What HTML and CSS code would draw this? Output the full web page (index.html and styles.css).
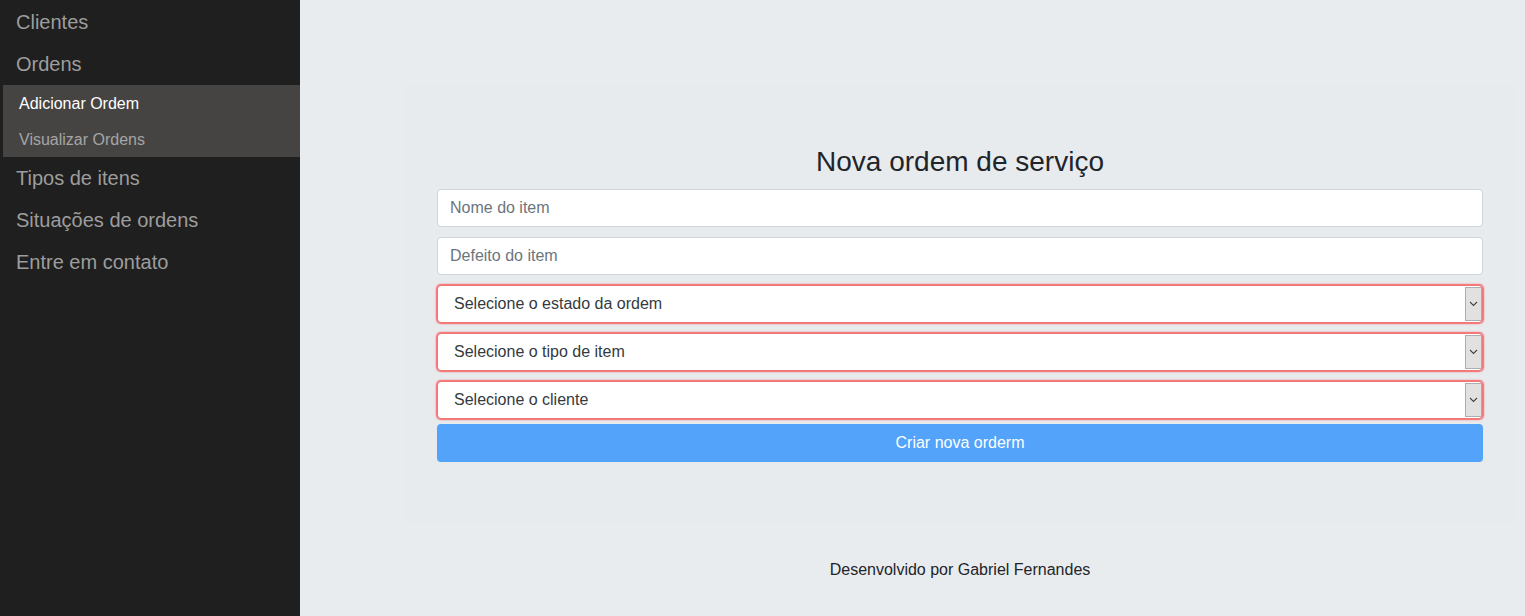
FILE: index.html
```html
<!DOCTYPE html>
<html lang="pt-BR">
<head>
<meta charset="utf-8">
<title>Nova ordem de serviço</title>
<link rel="stylesheet" href="styles.css">
</head>
<body>
<div class="app">
  <nav class="sidebar">
    <a class="nav-item top">Clientes</a>
    <a class="nav-item top">Ordens</a>
    <div class="submenu">
      <a class="sub-item active">Adicionar Ordem</a>
      <a class="sub-item">Visualizar Ordens</a>
    </div>
    <a class="nav-item">Tipos de itens</a>
    <a class="nav-item">Situações de ordens</a>
    <a class="nav-item">Entre em contato</a>
  </nav>
  <main class="main">
    <div class="wrap">
      <section class="panel">
        <h1 class="title">Nova ordem de serviço</h1>
        <form class="form">
          <input class="field" type="text" placeholder="Nome do item">
          <input class="field" type="text" placeholder="Defeito do item">
          <div class="select-wrap">
            <div class="select">Selecione o estado da ordem</div>
            <span class="arrow"><svg width="9" height="6" viewBox="0 0 9 6"><path d="M1 1l3.5 3.5L8 1" fill="none" stroke="#444" stroke-width="1.1"/></svg></span>
          </div>
          <div class="select-wrap">
            <div class="select">Selecione o tipo de item</div>
            <span class="arrow"><svg width="9" height="6" viewBox="0 0 9 6"><path d="M1 1l3.5 3.5L8 1" fill="none" stroke="#444" stroke-width="1.1"/></svg></span>
          </div>
          <div class="select-wrap">
            <div class="select">Selecione o cliente</div>
            <span class="arrow"><svg width="9" height="6" viewBox="0 0 9 6"><path d="M1 1l3.5 3.5L8 1" fill="none" stroke="#444" stroke-width="1.1"/></svg></span>
          </div>
          <button class="btn" type="button">Criar nova orderm</button>
        </form>
      </section>
      <footer class="footer">Desenvolvido por Gabriel Fernandes</footer>
    </div>
  </main>
</div>
</body>
</html>
```

FILE: styles.css
```css
* { box-sizing: border-box; }
html, body { margin: 0; padding: 0; }
body {
  font-family: "Liberation Sans", Arial, sans-serif;
  background: #e9ecef;
  color: #212529;
}
.app {
  display: flex;
  min-height: 616px;
}
.sidebar {
  width: 300px;
  flex: 0 0 300px;
  background: #1f1f1f;
  display: flex;
  flex-direction: column;
  min-height: 616px;
}
.nav-item {
  display: block;
  height: 42px;
  line-height: 42px;
  padding-left: 16px;
  font-size: 20px;
  color: #9d9d9d;
}
.nav-item.top {
  padding-top: 2px;
  line-height: 40px;
}
.nav-item.top:nth-child(2) { height: 43px; }
.submenu {
  margin-left: 3px;
  background: #464443;
  display: flex;
  flex-direction: column;
}
.sub-item {
  display: block;
  height: 36px;
  padding-top: 1px;
  line-height: 35px;
  padding-left: 16px;
  font-size: 16px;
  color: #a5a5a5;
}
.sub-item.active { color: #ffffff; }
.main {
  flex: 1;
  background: #e9ecef;
}
.wrap {
  width: 1110px;
  margin-left: 105px;
  margin-top: 83px;
}
.panel {
  padding: 62px 32px 62px;
  background: #e8ebee;
  box-shadow: 0 0 1px rgba(0,0,0,0.02);
}
.title {
  margin: 0 0 10px;
  font-size: 28px;
  font-weight: 400;
  line-height: 1.2;
  text-align: center;
  color: #212529;
}
.form {
  display: flex;
  flex-direction: column;
  gap: 10px;
}
.field {
  display: block;
  width: 100%;
  height: 38px;
  padding: 6px 12px;
  font-family: inherit;
  font-size: 16px;
  color: #495057;
  background: #fff;
  border: 1px solid #ced4da;
  border-radius: 4px;
  outline: none;
}
.field::placeholder { color: #6c757d; }
.select-wrap {
  position: relative;
  height: 38px;
}
.select {
  height: 38px;
  line-height: 36px;
  padding-left: 16px;
  font-size: 16px;
  color: #343a40;
  background: #fff;
  border: 1px solid #e77;
  border-radius: 4px;
  box-shadow: 0 0 1.5px 1px rgba(255, 60, 65, 0.8);
}
.arrow {
  position: absolute;
  right: 1px;
  top: 2px;
  width: 17px;
  height: 34px;
  background: #e1e1e1;
  border: 1px solid #adadad;
  display: flex;
  align-items: center;
  justify-content: center;
}
.btn {
  display: block;
  width: 100%;
  height: 38px;
  margin-top: -5px;
  border: none;
  border-radius: 4px;
  background: #52a3f9;
  color: #fff;
  font-family: inherit;
  font-size: 16px;
}
.footer {
  margin-top: 37px;
  text-align: center;
  font-size: 16px;
  line-height: 18px;
  color: #212529;
}
```
